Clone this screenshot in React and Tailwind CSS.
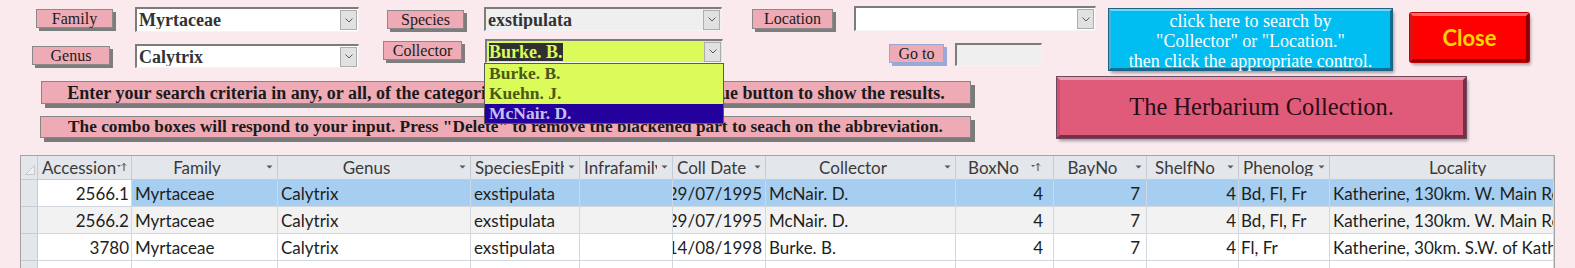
import React from "react";

function Chevron() {
  return (
    <svg width="8" height="5" viewBox="0 0 8 5">
      <polyline points="0.5,0.5 4,4 7.5,0.5" fill="none" stroke="#5a5a5a" strokeWidth="1" />
    </svg>
  );
}

function DropBtn() {
  return (
    <div className="ml-auto mr-[1px] flex h-[20px] w-[17px] shrink-0 items-center justify-center border border-[#adadad] bg-[#e1e1e1]">
      <Chevron />
    </div>
  );
}

function Label({ className, children }) {
  return (
    <div
      className={`flex shrink-0 items-center justify-center border bg-[#efabb5] font-['Liberation_Serif',serif] text-[16px] leading-none text-[#1c1c1c] ${className}`}
    >
      {children}
    </div>
  );
}

function Combo({ className, children, dropdown }) {
  return (
    <div
      className={`relative flex shrink-0 items-center border-t-2 border-l-2 border-r border-b border-t-[#7c7c7c] border-l-[#7c7c7c] border-r-[#f4f4f4] border-b-[#f4f4f4] font-['Liberation_Serif',serif] text-[18px] font-bold leading-none text-[#333333] ${className}`}
    >
      <div className="flex-1 overflow-hidden whitespace-nowrap pl-[2px]">{children}</div>
      <DropBtn />
      {dropdown}
    </div>
  );
}

function DropList() {
  return (
    <div className="absolute left-[-3px] top-[22px] z-20 flex w-[240px] flex-col border border-[#5a5a5a] bg-[#dbfb5b] font-['Liberation_Serif',serif] text-[17.5px] font-bold leading-none">
      <div className="flex h-[20px] items-center pl-[4px] text-[#4a5818]">Burke. B.</div>
      <div className="flex h-[20px] items-center pl-[4px] text-[#4a5818]">Kuehn. J.</div>
      <div className="flex h-[19px] items-center bg-[#24009c] pl-[4px] text-[#c4c2f2]">McNair. D.</div>
    </div>
  );
}

function DownArrow() {
  return (
    <svg width="7" height="4" viewBox="0 0 7 4">
      <polygon points="0.5,0.5 6.5,0.5 3.5,3.5" fill="#555" />
    </svg>
  );
}

function SortArrow() {
  return (
    <svg width="10" height="10" viewBox="0 0 10 10">
      <polygon points="0,3 4,3 2,5" fill="#555" />
      <line x1="7" y1="1.5" x2="7" y2="9" stroke="#444" strokeWidth="1" />
      <polyline points="5,3.5 7,1.5 9,3.5" fill="none" stroke="#444" strokeWidth="1" />
    </svg>
  );
}

const headers = [
  { t: "Accession", a: "left", icon: "sort" },
  { t: "Family", a: "center", icon: "down" },
  { t: "Genus", a: "center", icon: "down" },
  { t: "SpeciesEpithet", a: "left", icon: "down" },
  { t: "Infrafamily", a: "left", icon: "down" },
  { t: "Coll Date", a: "left", icon: "down" },
  { t: "Collector", a: "center", icon: "down" },
  { t: "BoxNo", a: "center", icon: "sort" },
  { t: "BayNo", a: "center", icon: "down" },
  { t: "ShelfNo", a: "center", icon: "down" },
  { t: "Phenology", a: "left", icon: "down" },
  { t: "Locality", a: "loc", icon: "none" },
];

const rows = [
  ["2566.1", "Myrtaceae", "Calytrix", "exstipulata", "", "29/07/1995", "McNair. D.", "4", "7", "4", "Bd, Fl, Fr", "Katherine, 130km. W. Main Road"],
  ["2566.2", "Myrtaceae", "Calytrix", "exstipulata", "", "29/07/1995", "McNair. D.", "4", "7", "4", "Bd, Fl, Fr", "Katherine, 130km. W. Main Road"],
  ["3780", "Myrtaceae", "Calytrix", "exstipulata", "", "14/08/1998", "Burke. B.", "4", "7", "4", "Fl, Fr", "Katherine, 30km. S.W. of Katherine"],
  ["", "", "", "", "", "", "", "", "", "", "", ""],
];

const cellAlign = [
  "justify-end pr-[2px]",
  "justify-start pl-[3px]",
  "justify-start pl-[3px]",
  "justify-start pl-[3px]",
  "justify-start pl-[3px]",
  "justify-end pr-[3px]",
  "justify-start pl-[3px]",
  "justify-end pr-[10px]",
  "justify-end pr-[6px]",
  "justify-end pr-[2px]",
  "justify-start pl-[2px]",
  "justify-start pl-[3px]",
];

function Table() {
  const rowBg = ["bg-[#a6cef0]", "bg-[#f2f2f2]", "bg-white", "bg-white"];
  return (
    <div className="ml-[20px] w-[1535px] border-l border-t border-r border-[#a3a3a3] font-['Lato',sans-serif] text-[17px] leading-none text-[#1e1e1e]">
      <div className="grid grid-cols-[17px_94px_146px_193px_109px_93px_93px_190px_98px_93px_92px_91px_224px]">
        <div className="flex h-[24px] items-end justify-end border-r border-b border-[#c6cbd3] bg-[#e3e6eb] pb-[4px] pr-[2px]">
          <svg width="10" height="10" viewBox="0 0 10 10">
            <polygon points="9.5,0.5 9.5,9.5 0.5,9.5" fill="#eef0f3" stroke="#c4c7cc" strokeWidth="1" />
          </svg>
        </div>
        {headers.map((h, i) => (
          <div
            key={i}
            className="flex h-[24px] items-center overflow-hidden border-r border-b border-[#c6cbd3] bg-[#e3e6eb] text-[#3a3a3a]"
          >
            <div
              className={`flex-1 overflow-hidden whitespace-nowrap ${
                h.a === "left" ? "pl-[4px] text-left" : h.a === "center" ? "text-center" : "pl-[99px] text-left"
              }`}
            >
              {h.t}
            </div>
            {h.icon === "down" && (
              <div className="flex w-[15px] shrink-0 items-center justify-center pb-[2px]">
                <DownArrow />
              </div>
            )}
            {h.icon === "sort" && (
              <div className={`flex shrink-0 items-center justify-start pb-[2px] ${i === 7 ? "w-[22px]" : "w-[14px]"}`}>
                <SortArrow />
              </div>
            )}
          </div>
        ))}
        {rows.map((r, ri) => (
          <React.Fragment key={ri}>
            <div className="h-[27px] border-r border-b border-[#c6cbd3] bg-[#e3e6eb]" />
            {r.map((c, ci) => (
              <div
                key={ci}
                className={`flex h-[27px] items-center overflow-hidden whitespace-nowrap border-r border-b border-[#d3d8e0] ${cellAlign[ci]} ${
                  ri === 0 && ci === 0 ? "bg-white" : rowBg[ri]
                }`}
              >
                <span className="shrink-0">{c}</span>
              </div>
            ))}
          </React.Fragment>
        ))}
      </div>
    </div>
  );
}

export default function App() {
  return (
    <div className="h-[268px] w-[1575px] overflow-hidden bg-[#fae9ed]">
      <div className="flex h-[77px]">
        <div className="w-[1100px] shrink-0">
          <div className="flex h-[38px] items-start">
            <Label className="ml-[36px] mt-[9px] h-[19px] w-[77px] border-[#8a8a8a] shadow-[3px_3px_0_0_#7d7d7d]">Family</Label>
            <Combo className="ml-[22px] mt-[7px] h-[25px] w-[224px] bg-white">Myrtaceae</Combo>
            <Label className="ml-[28px] mt-[10px] h-[19px] w-[77px] border-[#8a8a8a] shadow-[3px_3px_0_0_#7d7d7d]">Species</Label>
            <Combo className="ml-[20px] mt-[7px] h-[24px] w-[238px] bg-[#efefef]">exstipulata</Combo>
            <Label className="ml-[30px] mt-[9px] h-[20px] w-[81px] border-[#8a8a8a] shadow-[3px_3px_0_0_#7d7d7d]">Location</Label>
            <Combo className="ml-[21px] mt-[6px] h-[25px] w-[242px] bg-white"></Combo>
          </div>
          <div className="flex h-[39px] items-start">
            <Label className="ml-[32px] mt-[8px] h-[19px] w-[78px] border-[#8a8a8a] shadow-[3px_3px_0_0_#7d7d7d]">Genus</Label>
            <Combo className="ml-[25px] mt-[6px] h-[24px] w-[224px] bg-white">Calytrix</Combo>
            <Label className="ml-[24px] mt-[3px] h-[19px] w-[79px] border-[#8a8a8a] shadow-[3px_3px_0_0_#7d7d7d]">Collector</Label>
            <Combo className="z-20 ml-[23px] mt-[1px] h-[24px] w-[238px] bg-[#dbfb5b]" dropdown={<DropList />}>
              <span className="bg-[#303030] py-[2px] text-[#dbfb5b]">Burke. B.</span>
            </Combo>
            <Label className="ml-[166px] mt-[6px] h-[19px] w-[55px] border-[#9aa6d6] shadow-[3px_3px_0_0_#9aa9dc]">Go to</Label>
            <div className="ml-[11px] mt-[5px] h-[23px] w-[87px] border-t-2 border-l-2 border-r border-b border-t-[#7c7c7c] border-l-[#7c7c7c] border-r-[#f4f4f4] border-b-[#f4f4f4] bg-[#efefef]" />
          </div>
        </div>
        <div className="flex items-start">
          <div className="ml-[9px] mt-[9px] flex h-[61px] w-[283px] flex-col items-center border-2 border-t-[#6ed8fa] border-l-[#3cb6de] border-r-[#0a6f98] border-b-[#0a6f98] bg-[#00bdf2] font-['Liberation_Serif',serif] text-[18px] leading-[20px] text-white shadow-[0_0_0_1px_#1c6482,2px_3px_3px_0_rgba(0,0,0,0.35)]">
            <div className="whitespace-nowrap">click here to search by</div>
            <div className="whitespace-nowrap">"Collector" or "Location."</div>
            <div className="whitespace-nowrap">then click the appropriate control.</div>
          </div>
          <div className="ml-[18px] mt-[13px] flex h-[49px] w-[119px] items-center justify-center rounded-[2px] border-[3px] border-t-[#ff6a6a] border-l-[#e01010] border-r-[#8e0000] border-b-[#8e0000] bg-[#fe0000] font-['Lato',sans-serif] text-[22px] font-bold text-[#ffd400] shadow-[0_0_0_1px_#c40000,2px_3px_3px_0_rgba(0,0,0,0.3)]">
            Close
          </div>
        </div>
      </div>
      <div className="flex h-[78px]">
        <div className="w-[1057px] shrink-0 font-['Liberation_Serif',serif] font-bold leading-none text-[#1a1a1a]">
          <div className="ml-[41px] mt-[4px] flex h-[23px] w-[930px] items-center justify-center whitespace-nowrap border border-[#868686] bg-[#efabb5] text-[18px] shadow-[4px_4px_0_0_#7a7a7a]">
            Enter your search criteria in any, or all, of the categories above, then click the Continue button to show the results.
          </div>
          <div className="ml-[40px] mt-[12px] flex h-[22px] w-[931px] items-center justify-center whitespace-nowrap border border-[#868686] bg-[#efabb5] text-[17.25px] shadow-[4px_4px_0_0_#7a7a7a]">
            The combo boxes will respond to your input. Press "Delete" to remove the blackened part to seach on the abbreviation.
          </div>
        </div>
        <div className="flex h-[61px] w-[409px] items-center justify-center border-[3px] border-t-[#f09ab0] border-l-[#d04e6e] border-r-[#7c2c46] border-b-[#7c2c46] bg-[#e05b79] font-['Liberation_Serif',serif] text-[24.5px] leading-none text-[#2a0c16] shadow-[0_0_0_1px_#6a4a5e,2px_3px_3px_0_rgba(0,0,0,0.35)]">
          The Herbarium Collection.
        </div>
      </div>
      <Table />
    </div>
  );
}
